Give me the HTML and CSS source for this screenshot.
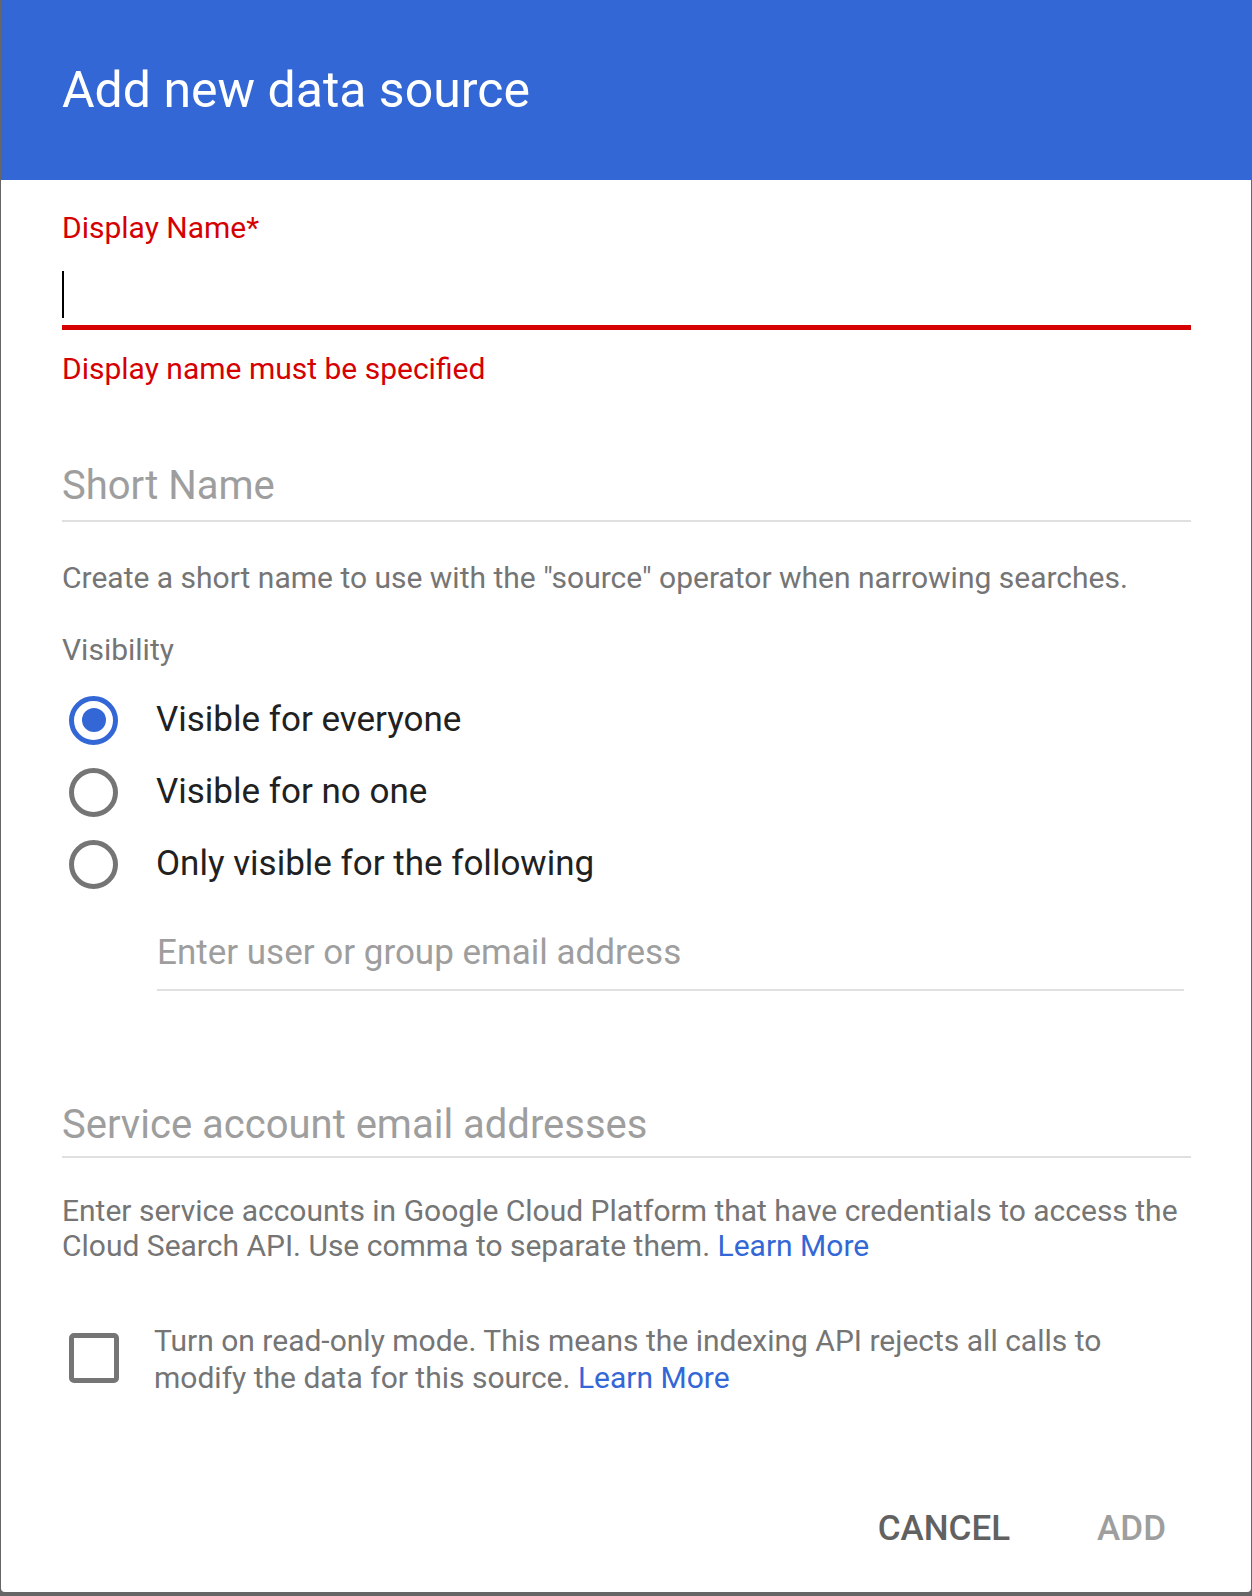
FILE: index.html
```html
<!DOCTYPE html>
<html lang="en">
<head>
<meta charset="utf-8">
<title>Add new data source</title>
<link rel="stylesheet" href="styles.css">
</head>
<body>
<div class="dialog">
  <header class="dlg-header">
    <h1 class="dlg-title">Add new data source</h1>
  </header>
  <div class="dlg-body">
    <div class="field-error">
      <div class="err-label">Display Name*</div>
      <div class="err-input"><span class="caret"></span></div>
      <div class="err-msg">Display name must be specified</div>
    </div>

    <div class="text-field short-name">Short Name</div>
    <p class="hint hint-short">Create a short name to use with the "source" operator when narrowing searches.</p>

    <p class="section-label">Visibility</p>
    <div class="radio-group">
      <div class="radio-row">
        <span class="radio checked"><span class="radio-dot"></span></span>
        <span class="radio-text">Visible for everyone</span>
      </div>
      <div class="radio-row">
        <span class="radio"></span>
        <span class="radio-text">Visible for no one</span>
      </div>
      <div class="radio-row">
        <span class="radio"></span>
        <span class="radio-text">Only visible for the following</span>
      </div>
    </div>
    <div class="sub-field">Enter user or group email address</div>

    <div class="text-field service">Service account email addresses</div>
    <p class="hint hint-service">Enter service accounts in Google Cloud Platform that have credentials to access the<br>Cloud Search API. Use comma to separate them. <a class="link" href="#">Learn More</a></p>

    <div class="check-row">
      <span class="checkbox"></span>
      <p class="check-text">Turn on read-only mode. This means the indexing API rejects all calls to<br>modify the data for this source. <a class="link" href="#">Learn More</a></p>
    </div>
  </div>
  <footer class="actions">
    <button class="btn btn-cancel" type="button">CANCEL</button>
    <button class="btn btn-add" type="button">ADD</button>
  </footer>
</div>
</body>
</html>
```

FILE: styles.css
```css
html, body {
  margin: 0;
  padding: 0;
}
body {
  background: #666666;
  width: 1252px;
  height: 1596px;
  overflow: hidden;
  font-family: Roboto, "Liberation Sans", Arial, sans-serif;
}
.dialog {
  margin-left: 1px;
  width: 1250px;
  height: 1592px;
  background: #ffffff;
  border-radius: 0 0 4px 4px;
  display: flex;
  flex-direction: column;
  overflow: hidden;
}
.dlg-header {
  background: #3367d6;
  height: 180px;
  box-sizing: border-box;
  padding: 60px 0 0 61px;
  flex: none;
}
.dlg-title {
  margin: 0;
  color: #ffffff;
  font-size: 50px;
  line-height: 60px;
  font-weight: 400;
}
.dlg-body {
  padding: 30px 60px 0 61px;
}
.err-label {
  color: #d50000;
  font-size: 30px;
  line-height: 35px;
}
.err-input {
  box-sizing: border-box;
  height: 85px;
  padding-top: 26px;
  border-bottom: 5px solid #d50000;
}
.caret {
  display: block;
  width: 2px;
  height: 47px;
  background: #000000;
}
.err-msg {
  margin-top: 21px;
  color: #d50000;
  font-size: 30px;
  line-height: 35px;
}
.text-field {
  color: #9e9e9e;
  font-size: 40px;
  line-height: 46px;
  border-bottom: 2px solid #e0e0e0;
}
.short-name {
  margin-top: 77px;
  padding-bottom: 11px;
}
.hint {
  margin: 0;
  color: #757575;
  font-size: 30px;
}
.hint-short {
  margin-top: 39px;
  line-height: 34px;
}
.section-label {
  margin: 38px 0 0;
  color: #757575;
  font-size: 30px;
  line-height: 34px;
}
.radio-group {
  margin-top: 17px;
}
.radio-row {
  height: 72px;
  display: flex;
  align-items: center;
  padding-left: 7px;
}
.radio {
  width: 49px;
  height: 49px;
  box-sizing: border-box;
  border: 5px solid #757575;
  border-radius: 50%;
  display: flex;
  align-items: center;
  justify-content: center;
  flex: none;
}
.radio.checked {
  border-color: #3367d6;
}
.radio-dot {
  width: 24px;
  height: 24px;
  border-radius: 50%;
  background: #3367d6;
}
.radio-text {
  margin-left: 38px;
  color: #212121;
  font-size: 35px;
  line-height: 42px;
}
.sub-field {
  margin: 32px 7px 0 95px;
  padding-bottom: 15px;
  color: #9e9e9e;
  font-size: 35px;
  line-height: 42px;
  border-bottom: 2px solid #e0e0e0;
}
.service {
  margin-top: 111px;
  padding-bottom: 8px;
}
.hint-service {
  margin-top: 35px;
  line-height: 35px;
  white-space: nowrap;
}
.link {
  color: #3367d6;
  text-decoration: none;
}
.check-row {
  margin-top: 59px;
  display: flex;
  align-items: flex-start;
}
.checkbox {
  flex: none;
  margin: 11px 0 0 7px;
  width: 50px;
  height: 50px;
  box-sizing: border-box;
  border: 5px solid #757575;
  border-radius: 5px;
}
.check-text {
  margin: 0 0 0 35px;
  color: #757575;
  font-size: 30px;
  line-height: 37px;
  white-space: nowrap;
}
.actions {
  margin-top: auto;
  display: flex;
  justify-content: flex-end;
  gap: 29px;
  padding: 0 56px 27px 0;
}
.btn {
  background: none;
  border: none;
  margin: 0;
  height: 72px;
  padding: 0 29px;
  font-family: Roboto, "Liberation Sans", Arial, sans-serif;
  font-size: 35px;
  line-height: 42px;
  font-weight: 500;
  cursor: pointer;
}
.btn-cancel {
  color: #616161;
}
.btn-add {
  color: #9e9e9e;
}
```
